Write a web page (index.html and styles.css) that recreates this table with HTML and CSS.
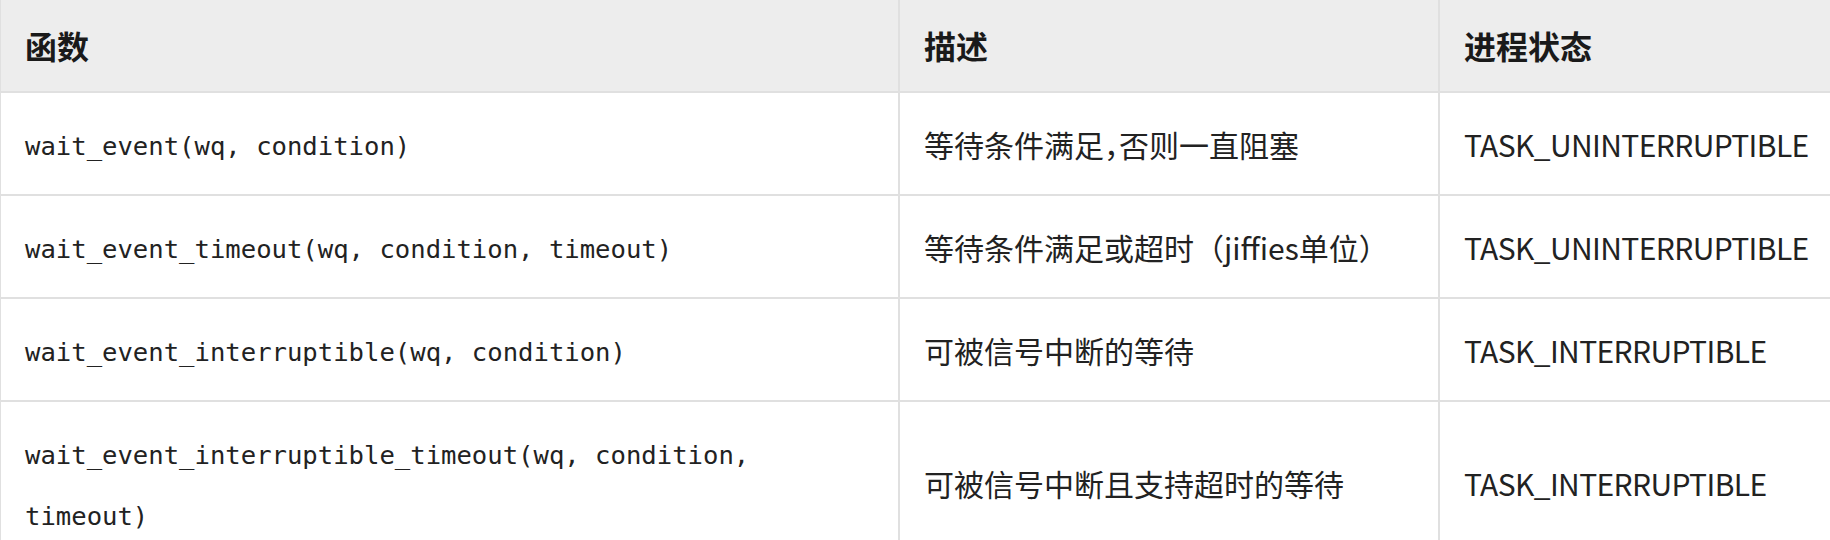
FILE: index.html
```html
<!DOCTYPE html>
<html lang="zh-CN">
<head>
<meta charset="utf-8">
<title>等待队列函数</title>
<link rel="stylesheet" href="styles.css">
</head>
<body>
<table class="api-table">
  <colgroup>
    <col class="col-func">
    <col class="col-desc">
    <col class="col-state">
  </colgroup>
  <thead>
    <tr>
      <th>函数</th>
      <th>描述</th>
      <th>进程状态</th>
    </tr>
  </thead>
  <tbody>
    <tr>
      <td><code class="fn">wait_event(wq, condition)</code></td>
      <td class="desc">等待条件满足<span class="punct">，</span>否则一直阻塞</td>
      <td class="state">TASK_UNINTERRUPTIBLE</td>
    </tr>
    <tr>
      <td><code class="fn">wait_event_timeout(wq, condition, timeout)</code></td>
      <td class="desc">等待条件满足或超时（jiffies单位）</td>
      <td class="state">TASK_UNINTERRUPTIBLE</td>
    </tr>
    <tr>
      <td><code class="fn">wait_event_interruptible(wq, condition)</code></td>
      <td class="desc">可被信号中断的等待</td>
      <td class="state">TASK_INTERRUPTIBLE</td>
    </tr>
    <tr>
      <td><code class="fn">wait_event_interruptible_timeout(wq, condition, timeout)</code></td>
      <td class="desc">可被信号中断且支持超时的等待</td>
      <td class="state">TASK_INTERRUPTIBLE</td>
    </tr>
  </tbody>
</table>
</body>
</html>
```

FILE: styles.css
```css
html, body {
  margin: 0;
  padding: 0;
  background: #ffffff;
  overflow: hidden;
}

.api-table {
  border-collapse: collapse;
  table-layout: fixed;
  width: 1838px;
  margin-left: -1px;
  font-family: "Noto Sans CJK SC", "Noto Sans", sans-serif;
  font-size: 32px;
  line-height: 56px;
  color: #222222;
}

.col-func { width: 899px; }
.col-desc { width: 540px; }
.col-state { width: 399px; }

.api-table th,
.api-table td {
  border: 2px solid #e0e0e0;
  text-align: left;
  vertical-align: middle;
  padding: 20px 24px;
}

.api-table thead tr {
  background: #ededed;
}

.api-table th {
  border-top: none;
  font-weight: 700;
  color: #1a1a1a;
  padding: 17px 24px 18px;
}

.api-table td {
  background: #ffffff;
}

.desc {
  font-size: 30px;
}

.punct {
  font-feature-settings: "halt";
}

.state {
  font-size: 30px;
  letter-spacing: -0.6px;
}

.fn {
  font-family: "DejaVu Sans Mono", "Liberation Mono", monospace;
  font-size: 25.6px;
  line-height: 56px;
  color: #222222;
}
```
